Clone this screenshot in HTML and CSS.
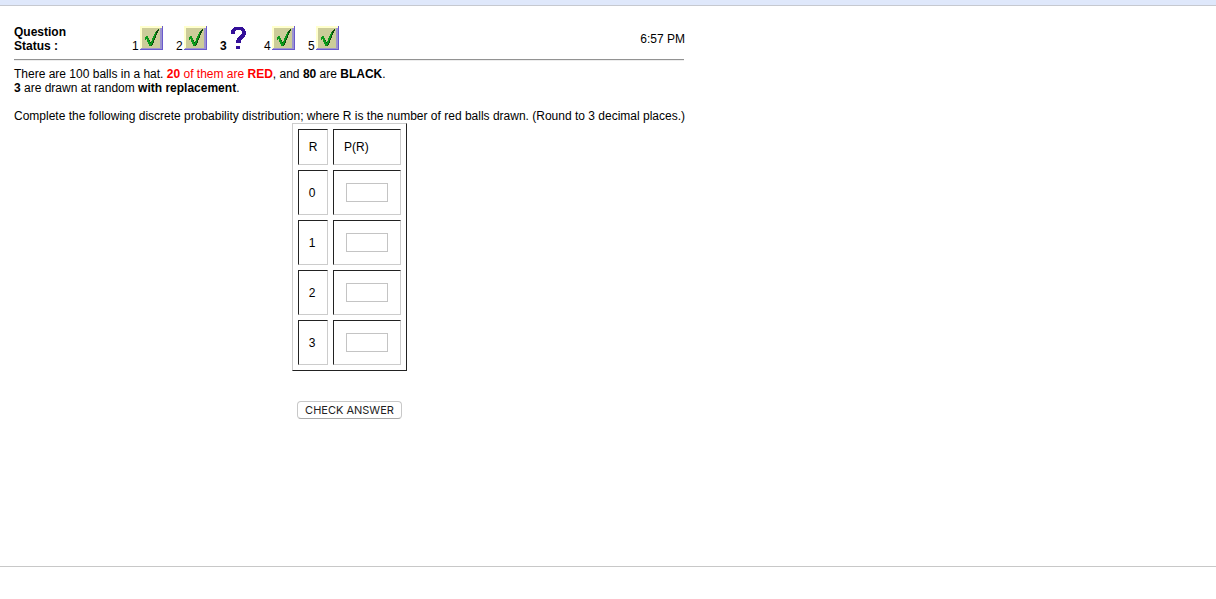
FILE: index.html
```
<!DOCTYPE html>
<html lang="en">
<head>
	<meta charset="UTF-8">
	<title>Question 3</title>
	<link rel="stylesheet" href="styles.css">
</head>
<body>
	<!-- icons used in the question status -->
	<svg class="defs" width="0" height="0">
		<symbol id="tick" viewBox="0 0 23 24">
			<path fill="#ffffcc" d="M0 0h23v24H0z"/>
			<path fill="#cccc99" d="M2 2h19v20H2z"/>
			<path fill="#9c94cf" d="M20 2h2v21H1v-1h19z"/>
			<path fill="#6a5acd" d="M22 0h1v24H0v-1h22z"/>
			<path fill="#0b4a0b" d="M18 3h1v2h-1v2h-1v2h-1v3h-1v2h-1v3h-1v2h-1v1h-2v-2H9v-3H8v-2h1v1h1v2h1v-1h1v-3h1v-2h1V9h1V7h1V5h1V4h1z"/>
			<path fill="#0a9a1a" d="M5 11h1v-1h2v2h1v3h1v2h1v-2h1v-3h1v-2h1V8h1V6h1v3h-1v3h-1v2h-1v3h-1v2h-1v1H9v-2H8v-2H7v-3H6v1H5z"/>
		</symbol>
		<symbol id="ask" viewBox="0 0 15 23">
			<path fill="#330f99" d="M3 0h9v1h1v1h1v2h1v4h-1v2h-1v1h-1v1h-1v1h-1v3H5v-3h1v-2h1v-1h1V9h1V8h1V7h1V4h-1V3H5v1H4v3H0V3h1V2h1V1h1z"/>
			<path fill="#330f99" d="M5 19h4v3H5z"/>
		</symbol>
	</svg>

	<div class="topbar"></div>
	<div id="wrapper">
		<div class="header">
			<div class="title">Question<br>Status :</div>
			<div class="status">
				<span class="item">1<svg class="tick"><use href="#tick"/></svg></span>
				<span class="item">2<svg class="tick"><use href="#tick"/></svg></span>
				<span class="item current">3<svg class="ask"><use href="#ask"/></svg></span>
				<span class="item">4<svg class="tick"><use href="#tick"/></svg></span>
				<span class="item">5<svg class="tick"><use href="#tick"/></svg></span>
			</div>
			<div class="time">6:57 PM</div>
		</div>
		<hr>
		<p>There are 100 balls in a hat. <span class="red"><b>20</b> of them are <b>RED</b></span>, and <b>80</b> are <b>BLACK</b>.<br>
		<b>3</b> are drawn at random <b>with replacement</b>.</p>
		<p>Complete the following discrete probability distribution; where R is the number of red balls drawn. (Round to 3 decimal places.)</p>
		<table>
			<tr class="head"><td>R</td><td class="prob">P(R)</td></tr>
			<tr><td>0</td><td><input type="text"></td></tr>
			<tr><td>1</td><td><input type="text"></td></tr>
			<tr><td>2</td><td><input type="text"></td></tr>
			<tr><td>3</td><td><input type="text"></td></tr>
		</table>
		<button id="checkBtn">CHECK ANSWER</button>
	</div>
	<div class="footer"></div>
</body>
</html>
```
FILE: styles.css
```
* {
	box-sizing: border-box;
}
body {
	margin: 0;
	height: 599px;
	display: flex;
	flex-direction: column;
	background-color: #fff;
	color: #000;
	font-family: Arial, "Liberation Sans", sans-serif;
	font-size: 12px;
	line-height: 14px;
}
.defs {
	display: none;
}
.topbar {
	height: 6px;
	background-color: #dfe8fb;
	border-bottom: 1px solid #c6c9d0;
}
#wrapper {
	width: 671px;
	margin-left: 14px;
	flex: 1;
}
.header {
	display: flex;
	height: 53px;
	padding-top: 19px;
}
.title {
	width: 118px;
	font-weight: bold;
}
.status {
	display: flex;
}
.item {
	display: flex;
	align-items: flex-end;
	width: 44px;
	height: 28px;
}
.current {
	font-weight: bold;
}
.tick {
	width: 23px;
	height: 24px;
	margin: 0 0 3px 1.33px;
}
.ask {
	width: 15px;
	height: 23px;
	margin: 0 0 3px 4.33px;
}
.time {
	margin-left: auto;
	padding-top: 7px;
}
hr {
	width: 670px;
	height: 2px;
	margin: 0 0 6px;
	border: 0;
	border-top: 1px solid #929292;
	border-bottom: 1px solid #ededed;
}
p {
	margin: 0 0 14px;
	white-space: nowrap;
}
.red {
	color: #f00;
}
table {
	width: 115px;
	height: 248px;
	margin: -14px 0 0 278px;
	border: 1px solid;
	border-color: #ccc #222 #222 #ccc;
	border-collapse: separate;
	border-spacing: 5px;
}
td {
	width: 30px;
	height: 45px;
	padding: 0;
	border: 1px solid;
	border-color: #222 #ccc #ccc #222;
	text-align: center;
}
td:first-child {
	padding-right: 2px;
}
td + td {
	width: 68px;
}
.head td {
	height: 36px;
}
.head td:first-child {
	padding-right: 0;
}
.head .prob {
	padding-left: 10px;
	text-align: left;
}
input {
	display: block;
	width: 42px;
	height: 19px;
	margin: 0 auto;
	border: 1px solid #c4c4c4;
	background-color: #fff;
}
#checkBtn {
	display: block;
	width: 105px;
	height: 18px;
	margin: 30px 0 0 283px;
	padding: 0;
	border: 1px solid #c8c8c8;
	border-bottom-color: #aaa;
	border-radius: 4px;
	background-color: #fff;
	font-family: Inter, sans-serif;
	font-size: 11px;
	line-height: 15px;
	color: #222;
}
.footer {
	height: 33px;
	border-top: 1px solid #c8c8c8;
}
```
